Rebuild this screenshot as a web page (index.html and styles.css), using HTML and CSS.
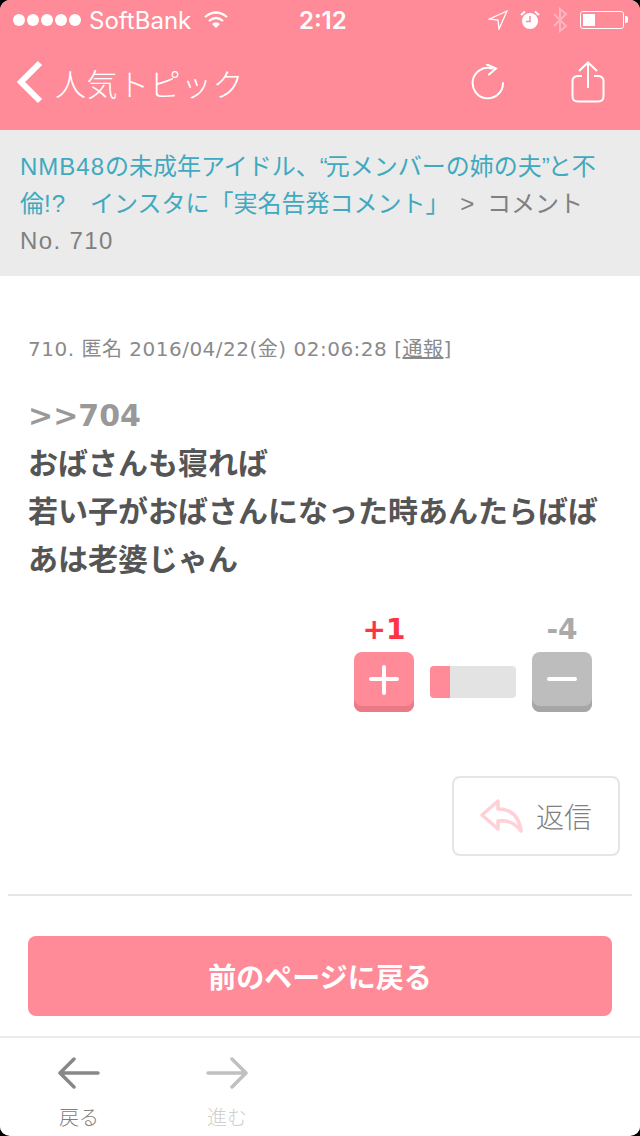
FILE: index.html
```html
<!DOCTYPE html>
<html lang="ja">
<head>
    <meta charset="UTF-8">
    <meta name="viewport" content="width=device-width, initial-scale=1.0">
    <title>コメント</title>
    <link rel="stylesheet" href="styles.css">
</head>
<body>
<div class="page">
    <div class="pink-head">
        <!-- status bar -->
        <div class="status">
            <div class="status-left">
                <span class="dots"><i></i><i></i><i></i><i></i><i></i></span>
                <span class="carrier">SoftBank</span>
                <svg class="wifi" width="24" height="18" viewBox="0 0 24 18">
                    <path d="M1 6 Q12 -3 23 6" fill="none" stroke="#fff" stroke-width="2.2"/>
                    <path d="M5 10 Q12 4 19 10" fill="none" stroke="#fff" stroke-width="2.2"/>
                    <path d="M8 13 Q12 9.5 16 13 L12 17 Z" fill="#fff"/>
                </svg>
            </div>
            <div class="clock">2:12</div>
            <div class="status-right">
                <svg width="20" height="20" viewBox="0 0 20 20">
                    <path d="M19 1 L1.500 9 L10 10 L11 19 Z" fill="none" stroke="#fff" stroke-width="1.300" stroke-linejoin="miter"/>
                </svg>
                <svg width="20" height="20" viewBox="0 0 20 20">
                    <circle cx="10" cy="11" r="8" fill="#fff"/>
                    <path d="M10 6 V11.500 H6" fill="none" stroke="#ff8b98" stroke-width="1.500"/>
                    <path d="M1 5 L5 1.500 M19 5 L15 1.500" stroke="#fff" stroke-width="2"/>
                </svg>
                <svg width="16" height="26" viewBox="0 0 16 26">
                    <path d="M2 7 L14 19 L8 24 V2 L14 7 L2 19" fill="none" stroke="#ffb3bc" stroke-width="2"/>
                </svg>
                <div class="battery"><div class="battery-level"></div></div>
            </div>
        </div>
        <!-- nav bar -->
        <div class="nav">
            <div class="nav-back">
                <svg width="28" height="44" viewBox="0 0 28 44">
                    <path d="M25 3 L6 22 L25 41" fill="none" stroke="#fff" stroke-width="6"/>
                </svg>
                <span class="nav-title">人気トピック</span>
            </div>
            <div class="nav-icons">
                <svg width="34" height="36" viewBox="0 0 34 36">
                    <path d="M21 4.500 A15.200 15.200 0 1 0 32 19" fill="none" stroke="#fff" stroke-width="2" stroke-linecap="round"/>
                    <path d="M16 0.500 L25 4.500 L18 10.500" fill="none" stroke="#fff" stroke-width="2" stroke-linecap="round"/>
                </svg>
                <svg width="34" height="42" viewBox="0 0 34 42">
                    <path d="M11 15 H7 Q1.500 15 1.500 20.500 V35 Q1.500 40.500 7 40.500 H27 Q32.500 40.500 32.500 35 V20.500 Q32.500 15 27 15 H23" fill="none" stroke="#fff" stroke-width="2"/>
                    <path d="M17 27 V2 M8 10 L17 1.500 L26 10" fill="none" stroke="#fff" stroke-width="2"/>
                </svg>
            </div>
        </div>
    </div>

    <div class="crumb">
        <a class="crumb-link"><span class="crumb-latin">NMB48</span>の未成年アイドル、<span class="crumb-q">“</span>元メンバーの姉の夫<span class="crumb-q">”</span>と不</a><a class="crumb-link">倫<span class="crumb-latin">!?</span>　インスタに「実名告発コメント」</a> <span class="crumb-sep">&gt;</span> コメント <span class="crumb-no">No. 710</span>
    </div>

    <div class="comment">
        <div class="comment-meta">710. 匿名 2016/04/22(金) 02:06:28 [<u>通報</u>]</div>
        <div class="comment-body">
            <span class="anchor">&gt;&gt;704</span><br>
            おばさんも寝れば<br>
            若い子がおばさんになった時あんたらばば<br>
            あは老婆じゃん
        </div>

        <div class="votes">
            <div class="vote">
                <div class="vote-num plus-num">+1</div>
                <div class="vote-btn plus-btn"><span class="bar-h"></span><span class="bar-v"></span></div>
            </div>
            <div class="meter"><div class="meter-fill"></div></div>
            <div class="vote">
                <div class="vote-num minus-num">-4</div>
                <div class="vote-btn minus-btn"><span class="bar-h"></span></div>
            </div>
        </div>

        <div class="reply-row">
            <div class="reply">
                <svg width="44" height="34" viewBox="0 0 44 34">
                    <path d="M18 2 L2 16 L18 30 V22 Q32 20 41 32 Q38 10 18 10 Z" fill="none" stroke="#ffd0d5" stroke-width="3.500" stroke-linejoin="round"/>
                </svg>
                <span>返信</span>
            </div>
        </div>
    </div>

    <hr class="divider">

    <div class="back-wrap">
        <div class="back-btn">前のページに戻る</div>
    </div>

    <div class="toolbar">
        <div class="tool">
            <svg width="42" height="34" viewBox="0 0 42 34">
                <path d="M40 17 H3 M16 3 L2 17 L16 31" fill="none" stroke="#888" stroke-width="3.500" stroke-linecap="round" stroke-linejoin="round"/>
            </svg>
            <span>戻る</span>
        </div>
        <div class="tool tool-off">
            <svg width="42" height="34" viewBox="0 0 42 34">
                <path d="M2 17 H39 M26 3 L40 17 L26 31" fill="none" stroke="#c0c0c0" stroke-width="3.500" stroke-linecap="round" stroke-linejoin="round"/>
            </svg>
            <span>進む</span>
        </div>
    </div>
</div>
</body>
</html>
```

FILE: styles.css
```css
html, body {
    margin: 0;
    padding: 0;
    background: #000;
}

.page {
    width: 640px;
    height: 1136px;
    background: #fff;
    border-radius: 10px;
    overflow: hidden;
    display: flex;
    flex-direction: column;
    font-family: "Liberation Sans", "Noto Sans CJK JP", sans-serif;
}

/* header */
.pink-head {
    background: #ff8b98;
    height: 130px;
    color: #fff;
}

.status {
    height: 40px;
    display: flex;
    align-items: center;
    justify-content: space-between;
    padding: 0 13px 0 13px;
    position: relative;
    font-family: "Inter", "Liberation Sans", sans-serif;
}

.status-left {
    display: flex;
    align-items: center;
    gap: 13px;
    width: 220px;
}

.dots {
    display: flex;
    gap: 2px;
}

.dots i {
    width: 12px;
    height: 12px;
    background: #fff;
    border-radius: 50%;
}

.carrier {
    font-size: 24px;
    margin-left: -5px;
}

.clock {
    font-size: 24px;
    font-weight: 600;
    position: absolute;
    left: 299px;
    top: 6px;
}

.status-right {
    display: flex;
    align-items: center;
    gap: 12px;
}

.battery {
    width: 44px;
    height: 18px;
    border: 1.500px solid #fff;
    border-radius: 3px;
    padding: 2px;
    box-sizing: border-box;
    position: relative;
    margin-right: 3px;
}

.battery:after {
    content: "";
    position: absolute;
    right: -5px;
    top: 4px;
    width: 3px;
    height: 7px;
    background: #fff;
    border-radius: 0 2px 2px 0;
}

.battery-level {
    width: 12px;
    height: 100%;
    background: #fff;
}

.nav {
    height: 90px;
    display: flex;
    align-items: center;
    justify-content: space-between;
    padding: 0 35px 6px 15px;
    box-sizing: border-box;
}

.nav-back {
    display: flex;
    align-items: center;
    gap: 12px;
}

.nav-title {
    font-size: 31px;
    font-weight: 300;
    letter-spacing: 0.500px;
    font-family: "Noto Sans CJK JP", sans-serif;
}

.nav-icons {
    display: flex;
    align-items: center;
    gap: 66px;
}

/* breadcrumb */
.crumb {
    background: #ebebeb;
    height: 146px;
    box-sizing: border-box;
    padding: 18px 20px;
    font-size: 24px;
    line-height: 37px;
    color: #808080;
    text-spacing-trim: space-all;
}

.crumb-link {
    color: #3fa9bf;
}

.crumb-latin {
    letter-spacing: 1px;
}

.crumb-q {
    letter-spacing: -2px;
}

.crumb-sep {
    margin: 0 6px 0 4px;
}

.crumb-no {
    letter-spacing: 1.400px;
    white-space: nowrap;
}

/* comment */
.comment {
    padding: 57px 28px 0;
    font-family: "DejaVu Sans", "Noto Sans CJK JP", sans-serif;
}

.comment-meta {
    font-size: 20px;
    line-height: 32px;
    color: #8a8a8a;
    letter-spacing: 0.500px;
}

.comment-body {
    margin-top: 27px;
    font-size: 30px;
    font-weight: 700;
    line-height: 48px;
    color: #555;
}

.anchor {
    color: #999;
}

.votes {
    display: flex;
    justify-content: flex-end;
    align-items: flex-end;
    gap: 16px;
    margin-top: 24px;
    padding-right: 20px;
}

.vote {
    width: 60px;
    text-align: center;
}

.vote-num {
    font-size: 28px;
    font-weight: 700;
    line-height: 44px;
}

.plus-num {
    color: #ff3344;
}

.minus-num {
    color: #aaa;
}

.vote-btn {
    width: 60px;
    height: 60px;
    border-radius: 8px;
    box-sizing: border-box;
    display: flex;
    align-items: center;
    justify-content: center;
    padding-bottom: 6px;
    position: relative;
}

.plus-btn {
    background: #ff8b98;
    box-shadow: inset 0 -6px 0 #e97a86;
}

.minus-btn {
    background: #bdbdbd;
    box-shadow: inset 0 -6px 0 #a6a6a6;
}

.bar-h {
    width: 30px;
    height: 4px;
    background: #fff;
    border-radius: 2px;
}

.bar-v {
    width: 4px;
    height: 30px;
    background: #fff;
    border-radius: 2px;
    position: absolute;
    top: 13px;
    left: 28px;
}

.meter {
    width: 86px;
    height: 32px;
    background: #e3e3e3;
    border-radius: 4px;
    overflow: hidden;
    margin-bottom: 14px;
}

.meter-fill {
    width: 20px;
    height: 100%;
    background: #ff8b98;
}

.reply-row {
    display: flex;
    justify-content: flex-end;
    margin-top: 64px;
    margin-right: -8px;
}

.reply {
    width: 168px;
    height: 80px;
    box-sizing: border-box;
    border: 2px solid #e5e5e5;
    border-radius: 8px;
    display: flex;
    align-items: center;
    justify-content: center;
    gap: 12px;
    font-size: 28px;
    font-weight: 300;
    color: #808080;
    font-family: "Noto Sans CJK JP", sans-serif;
}

.divider {
    margin: 38px 8px 0;
    border: 0;
    height: 2px;
    background: #e5e5e5;
}

.back-wrap {
    padding: 40px 28px 0;
}

.back-btn {
    height: 80px;
    background: #ff8b98;
    border-radius: 8px;
    color: #fff;
    font-size: 28px;
    font-weight: 700;
    display: flex;
    align-items: center;
    justify-content: center;
}

/* bottom toolbar */
.toolbar {
    margin-top: 20px;
    border-top: 2px solid #ececec;
    height: 98px;
    box-sizing: border-box;
    display: flex;
    gap: 98px;
    padding: 18px 0 0 54px;
    background: #fff;
}

.tool {
    width: 50px;
    display: flex;
    flex-direction: column;
    align-items: center;
    font-size: 20px;
    line-height: 30px;
    font-weight: 300;
    color: #808080;
    gap: 12px;
    font-family: "Noto Sans CJK JP", sans-serif;
}

.tool-off {
    color: #cfcfcf;
}
```
